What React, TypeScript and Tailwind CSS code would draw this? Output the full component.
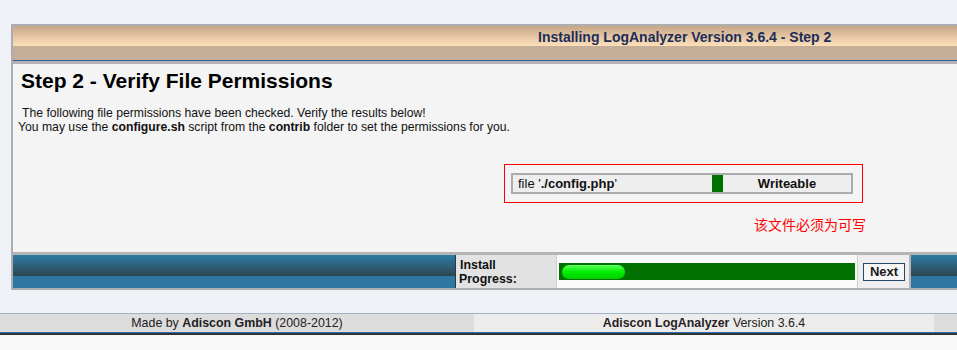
export default function App() {
  return (
    <div className="w-full min-h-[350px] overflow-hidden bg-[#eef1f5] font-['Liberation_Sans',Arial,sans-serif] text-[12px] text-[#111]">
      <div className="pt-[24px] pl-[11px]">
        <div className="w-[1000px] border-2 border-r-0 border-[#abadb0] bg-[#b4b4b4]">
          {/* title band */}
          <div className="h-[35px] border-b border-[#2f5f9f] bg-[linear-gradient(to_bottom,#c8a788_0px,#fde0b9_20px,#c5ae98_20px,#c5ae98_34px)] pl-[525px] pt-[3px] text-[14px] leading-[16px] font-bold text-[#1c2d5a]">
            Installing LogAnalyzer Version 3.6.4 - Step 2
          </div>

          {/* content */}
          <div className="mt-[3px] h-[188px] bg-[#f4f4f4] pt-[4px]">
            <h1 className="pl-[8px] text-[21px] leading-[25px] font-bold text-black">Step 2 - Verify File Permissions</h1>
            <p className="mt-[13px] pl-[5px] text-[12.2px] leading-[14px]">
              <span className="pl-[4px]">The following file permissions have been checked. Verify the results below!</span>
              <br />
              You may use the <b>configure.sh</b> script from the <b>contrib</b> folder to set the permissions for you.
            </p>
            <div className="mt-[30px] ml-[491px] w-[359px] border border-[#ff0000] pt-[8px] pb-[8px] pl-[6px]">
              <div className="flex h-[21px] w-[342px] border-2 border-[#acacac] bg-[#eeeeee]">
                <div className="flex w-[199px] items-center pl-[5px] text-[13px]">
                  file '<b>./config.php</b>'
                </div>
                <div className="w-[11px] bg-[#007000]" />
                <div className="flex flex-1 items-center justify-center text-[13px] font-bold">Writeable</div>
              </div>
            </div>
            <div className="mt-[11px] ml-[741px] text-[14px] leading-[20px] text-[#ff0000] font-['Noto_Sans_CJK_SC',sans-serif]">
              该文件必须为可写
            </div>
          </div>

          {/* progress bar row */}
          <div className="mt-[3px] flex h-[33px]">
            <div className="w-[443px] border-r border-[#1e3d52] bg-[linear-gradient(to_bottom,#2e7ba4_0px,#2f4652_21px,#2d77a0_21px)]" />
            <div className="flex w-[100px] flex-col justify-center bg-[#e2e2e2] pl-[3px] text-[12.4px] leading-[14px] font-bold">
              <span className="pl-[1px]">Install</span>
              <span>Progress:</span>
            </div>
            <div className="flex w-[301px] items-center border-l border-[#cfcfcf] bg-[#fafafa] pl-[2px]">
              <div className="flex h-[17px] w-[296px] items-center bg-[#007000] pl-[3px]">
                <div className="h-[14px] w-[63px] rounded-full bg-[linear-gradient(to_bottom,#5dff5d,#00ee00_50%,#00cc00)]" />
              </div>
            </div>
            <div className="flex w-[52px] items-center border-l border-[#d0d0d0] bg-[#eeeeee] pl-[5px]">
              <button className="h-[18px] w-[42px] border border-[#27476b] bg-[#f6f6f6] text-[13px] leading-[16px] font-bold text-[#1a1a1a]">
                Next
              </button>
            </div>
            <div className="flex-1 border-l-2 border-[#b4b4b4] bg-[linear-gradient(to_bottom,#2e7ba4_0px,#2f4652_21px,#2d77a0_21px)]" />
          </div>
        </div>
      </div>

      {/* footer */}
      <div className="mt-[23px] border-t border-[#a4b4c4]">
        <div className="flex h-[18px] bg-[#dcdcdc] text-[12.4px] leading-[18px] text-[#222]">
          <div className="w-[474px] text-center">
            Made by <b>Adiscon GmbH</b> (2008-2012)
          </div>
          <div className="w-[460px] bg-[#ececec] text-center">
            <b className="text-[#2a1f1f]">Adiscon LogAnalyzer</b> Version 3.6.4
          </div>
          <div className="flex-1" />
        </div>
        <div className="h-px bg-[#2e6fb0]" />
        <div className="h-[2px] bg-[#333]" />
        <div className="h-[20px] bg-[#f8f8f8]" />
      </div>
    </div>
  );
}
